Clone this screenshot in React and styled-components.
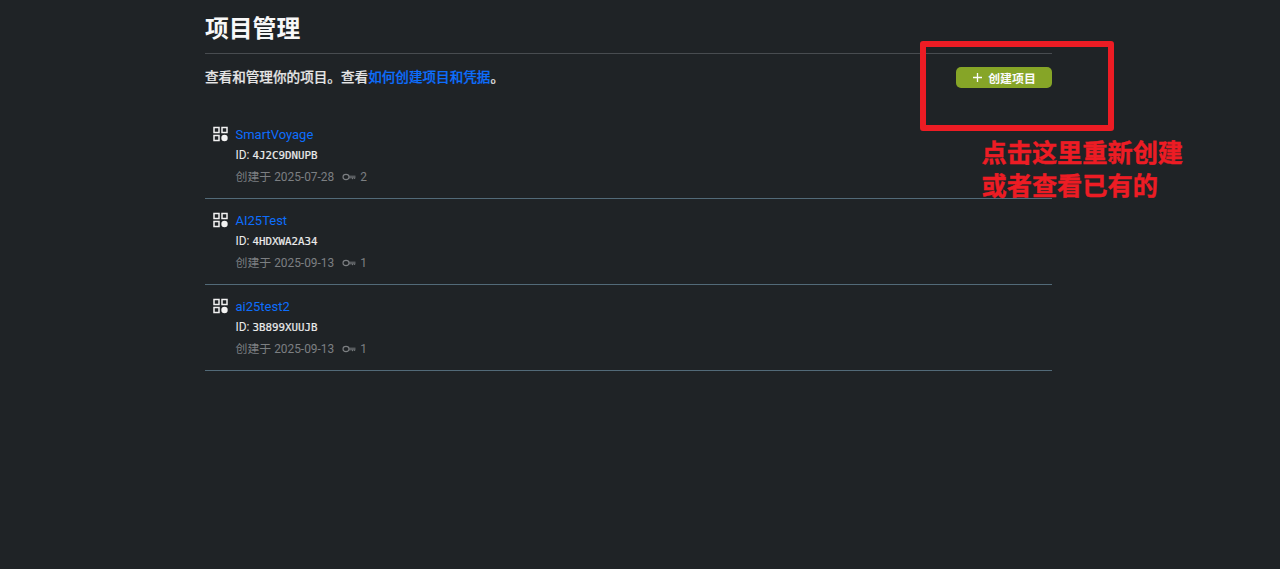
import React from 'react';
import styled, { createGlobalStyle } from 'styled-components';

const GlobalStyle = createGlobalStyle`
  html, body {
    margin: 0;
    padding: 0;
    background: #1f2326;
  }
  body {
    font-family: Roboto, "Noto Sans CJK SC", sans-serif;
    color: #f0f0f0;
  }
`;

const Page = styled.div`
  position: relative;
  width: 1280px;
  height: 569px;
  overflow: hidden;
  background: #1f2326;
`;

const Content = styled.main`
  width: 847px;
  margin-left: 205px;
`;

const Title = styled.h1`
  margin: 0;
  height: 54px;
  box-sizing: border-box;
  padding-top: 13px;
  border-bottom: 1px solid #484c50;
  font-size: 23.8px;
  line-height: 32px;
  font-weight: 700;
  color: #f8f8f8;
`;

const Intro = styled.div`
  display: flex;
  justify-content: space-between;
  align-items: flex-start;
  box-sizing: border-box;
  height: 58.5px;
  padding-top: 13px;
`;

const IntroText = styled.p`
  margin: 0;
  font-size: 13.6px;
  line-height: 20px;
  font-weight: 500;
  -webkit-text-stroke: 0.2px currentColor;
  color: #e6e6e6;
`;

const DocLink = styled.a`
  color: #0d6efd;
  text-decoration: none;
`;

const CreateButton = styled.button`
  display: flex;
  align-items: center;
  justify-content: center;
  gap: 5px;
  width: 96px;
  height: 21px;
  padding: 0;
  border: 0;
  border-radius: 5px;
  background: #86a527;
  color: #fbfbfb;
  font-family: inherit;
  font-size: 11.9px;
  font-weight: 700;
`;

const ProjectList = styled.ul`
  margin: 0;
  padding: 0;
  list-style: none;
`;

const ProjectRow = styled.li`
  display: flex;
  height: 86px;
  box-sizing: border-box;
  padding: 12px 0 0 8px;
  border-bottom: 1px solid #526a78;
`;

const IconCell = styled.div`
  width: 22.5px;
  padding-top: 1px;
  flex: none;
`;

const ProjectBody = styled.div`
  display: flex;
  flex-direction: column;
`;

const ProjectName = styled.a`
  font-size: 13px;
  line-height: 20px;
  color: #0d6efd;
  text-decoration: none;
`;

const ProjectId = styled.div`
  margin-top: 2px;
  font-size: 11.9px;
  line-height: 16px;
  color: #ececec;
`;

const Mono = styled.span`
  font-family: "DejaVu Sans Mono", monospace;
  font-size: 10.8px;
  -webkit-text-stroke: 0.2px currentColor;
`;

const Meta = styled.div`
  display: flex;
  align-items: center;
  gap: 8px;
  margin-top: 4px;
  font-size: 11.9px;
  line-height: 18px;
  color: #7c7f82;
`;

const KeyCount = styled.span`
  display: flex;
  align-items: center;
  gap: 4px;
`;

const Callout = styled.div`
  position: absolute;
  left: 920px;
  top: 41px;
  width: 194px;
  height: 90px;
  box-sizing: border-box;
  border: 6px solid #ed1c24;
  border-radius: 3px;
`;

const CalloutText = styled.div`
  position: absolute;
  left: 981.5px;
  top: 137px;
  font-family: "Liberation Sans", "Noto Sans CJK SC", sans-serif;
  font-size: 25.2px;
  line-height: 33px;
  font-weight: 700;
  -webkit-text-stroke: 0.4px currentColor;
  color: #ed1c24;
`;

const ProjectIcon = () => (
  <svg width="16" height="16" viewBox="0 0 16 16" fill="none" stroke="#f2f2f2" strokeWidth="1.5">
    <rect x="1" y="1.5" width="5" height="5" />
    <rect x="9" y="1.5" width="5" height="5" />
    <rect x="1" y="9.5" width="5" height="5" />
    <circle cx="11.5" cy="12" r="3.2" fill="#f2f2f2" stroke="none" />
  </svg>
);

const KeyIcon = () => (
  <svg width="14" height="10" viewBox="0 0 14 10" fill="none" stroke="#7c7f82" strokeWidth="1.1">
    <ellipse cx="4" cy="5" rx="3" ry="2.6" />
    <path d="M7 4.2h6.5M7 5.8h6.5" strokeWidth="0.9" />
    <path d="M10.5 5.8v1.4M12.5 5.8v1" strokeWidth="0.9" />
  </svg>
);

const PlusIcon = () => (
  <svg width="11" height="11" viewBox="0 0 11 11" stroke="#fbfbfb" strokeWidth="1.3">
    <path d="M5.5 1v9M1 5.5h9" />
  </svg>
);

const projects = [
  { name: 'SmartVoyage', id: '4J2C9DNUPB', date: '2025-07-28', keys: 2 },
  { name: 'AI25Test', id: '4HDXWA2A34', date: '2025-09-13', keys: 1 },
  { name: 'ai25test2', id: '3B899XUUJB', date: '2025-09-13', keys: 1 },
];

export default function App() {
  return (
    <Page>
      <GlobalStyle />
      <Content>
        <Title>项目管理</Title>
        <Intro>
          <IntroText>
            查看和管理你的项目。查看<DocLink href="#">如何创建项目和凭据</DocLink>。
          </IntroText>
          <CreateButton>
            <PlusIcon />
            创建项目
          </CreateButton>
        </Intro>
        <ProjectList>
          {projects.map((project) => (
            <ProjectRow key={project.id}>
              <IconCell>
                <ProjectIcon />
              </IconCell>
              <ProjectBody>
                <ProjectName href="#">{project.name}</ProjectName>
                <ProjectId>
                  ID: <Mono>{project.id}</Mono>
                </ProjectId>
                <Meta>
                  <span>创建于 {project.date}</span>
                  <KeyCount>
                    <KeyIcon />
                    {project.keys}
                  </KeyCount>
                </Meta>
              </ProjectBody>
            </ProjectRow>
          ))}
        </ProjectList>
      </Content>
      <Callout />
      <CalloutText>
        点击这里重新创建
        <br />
        或者查看已有的
      </CalloutText>
    </Page>
  );
}
